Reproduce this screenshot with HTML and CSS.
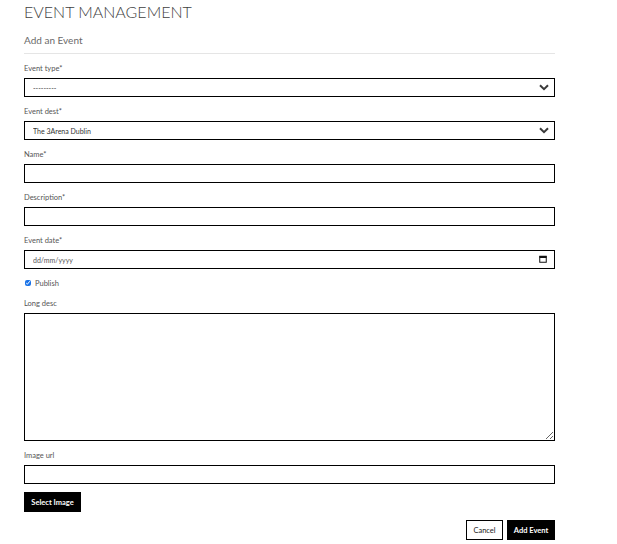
FILE: index.html
```html
<!DOCTYPE html>
<html lang="en">
<head>
<meta charset="utf-8">
<title>Event Management</title>
<link rel="stylesheet" href="styles.css">
</head>
<body>
<div class="page">
  <h1 class="title">EVENT MANAGEMENT</h1>
  <h2 class="subtitle">Add an Event</h2>
  <hr class="rule">
  <form class="form">
    <div class="field">
      <label class="label">Event type*</label>
      <div class="select-wrap">
        <select class="control select"><option>---------</option></select>
        <svg class="chev" viewBox="0 0 10 7" width="10" height="7"><path d="M1 1.2 L5 5.2 L9 1.2" fill="none" stroke="#3a3a3a" stroke-width="2"/></svg>
      </div>
    </div>
    <div class="field">
      <label class="label">Event dest*</label>
      <div class="select-wrap">
        <select class="control select"><option>The 3Arena Dublin</option></select>
        <svg class="chev" viewBox="0 0 10 7" width="10" height="7"><path d="M1 1.2 L5 5.2 L9 1.2" fill="none" stroke="#3a3a3a" stroke-width="2"/></svg>
      </div>
    </div>
    <div class="field">
      <label class="label">Name*</label>
      <input class="control" type="text">
    </div>
    <div class="field">
      <label class="label">Description*</label>
      <input class="control" type="text">
    </div>
    <div class="field">
      <label class="label">Event date*</label>
      <div class="select-wrap">
        <input class="control date" type="text" placeholder="dd/mm/yyyy">
        <svg class="cal" viewBox="0 0 8 8" width="8" height="8"><rect x="0.75" y="1.25" width="6.5" height="6" fill="none" stroke="#111" stroke-width="1"/><rect x="0.5" y="1" width="7" height="2" fill="#111"/></svg>
      </div>
    </div>
    <div class="check-row">
      <input class="check" type="checkbox" checked>
      <span class="check-label">Publish</span>
    </div>
    <div class="field">
      <label class="label">Long desc</label>
      <textarea class="control area"></textarea>
    </div>
    <div class="field">
      <label class="label">Image url</label>
      <input class="control" type="text">
    </div>
    <div class="field">
      <button type="button" class="btn btn-dark">Select Image</button>
    </div>
    <div class="actions">
      <button type="button" class="btn btn-light">Cancel</button>
      <button type="button" class="btn btn-dark">Add Event</button>
    </div>
  </form>
</div>
</body>
</html>
```

FILE: styles.css
```css
* { box-sizing: border-box; }
body {
  margin: 0;
  background: #fff;
  font-family: Lato, "Open Sans", sans-serif;
  color: #333;
}
.page {
  width: 555px;
  padding-left: 24px;
}
.title {
  margin: 1px 0 0;
  font-size: 16px;
  line-height: 22px;
  font-weight: 300;
  color: #3f3f3f;
  letter-spacing: 0;
}
.subtitle {
  margin: 10px 0 0;
  font-size: 10px;
  line-height: 14px;
  font-weight: 400;
  color: #6a6a6a;
}
.rule {
  margin: 6px 0 8px;
  border: 0;
  border-top: 1px solid #e5e5e5;
}
.form { display: flex; flex-direction: column; }
.field { display: flex; flex-direction: column; margin-bottom: 8px; }
.label {
  font-size: 7.5px;
  line-height: 14px;
  color: #555;
  margin-bottom: 2px;
}
.control {
  display: block;
  width: 100%;
  height: 19px;
  border: 1px solid #000;
  border-radius: 0;
  background: #fff;
  font-family: Lato, sans-serif;
  font-size: 7px;
  color: #333;
  padding: 0 8px;
  outline: none;
}
.select { appearance: none; -webkit-appearance: none; }
.select-wrap { position: relative; }
.chev { position: absolute; right: 6px; top: 6px; }
.cal { position: absolute; right: 8px; top: 5px; }
.date::placeholder { color: #555; }
.check-row {
  display: flex;
  align-items: center;
  height: 14px;
  margin-top: -1px;
  margin-bottom: 7px;
}
.check {
  width: 6px;
  height: 6px;
  margin: 0 4px 0 1px;
  accent-color: #1a73e8;
}
.check-label { font-size: 7.5px; color: #555; }
.area {
  height: 128px;
  resize: vertical;
  padding: 4px 8px;
}
.btn {
  font-family: Lato, sans-serif;
  font-size: 7.5px;
  font-weight: 700;
  height: 20px;
  padding: 0;
  white-space: nowrap;
  border: 1px solid #000;
  border-radius: 0;
  cursor: pointer;
}
.btn-dark { background: #000; color: #fff; }
.btn-light { background: #fff; color: #222; font-weight: 400; }
.field .btn { align-self: flex-start; width: 57px; }
.actions {
  display: flex;
  justify-content: flex-end;
  gap: 4px;
}
.actions .btn-light { width: 37px; }
.actions .btn-dark { width: 48px; }
```
